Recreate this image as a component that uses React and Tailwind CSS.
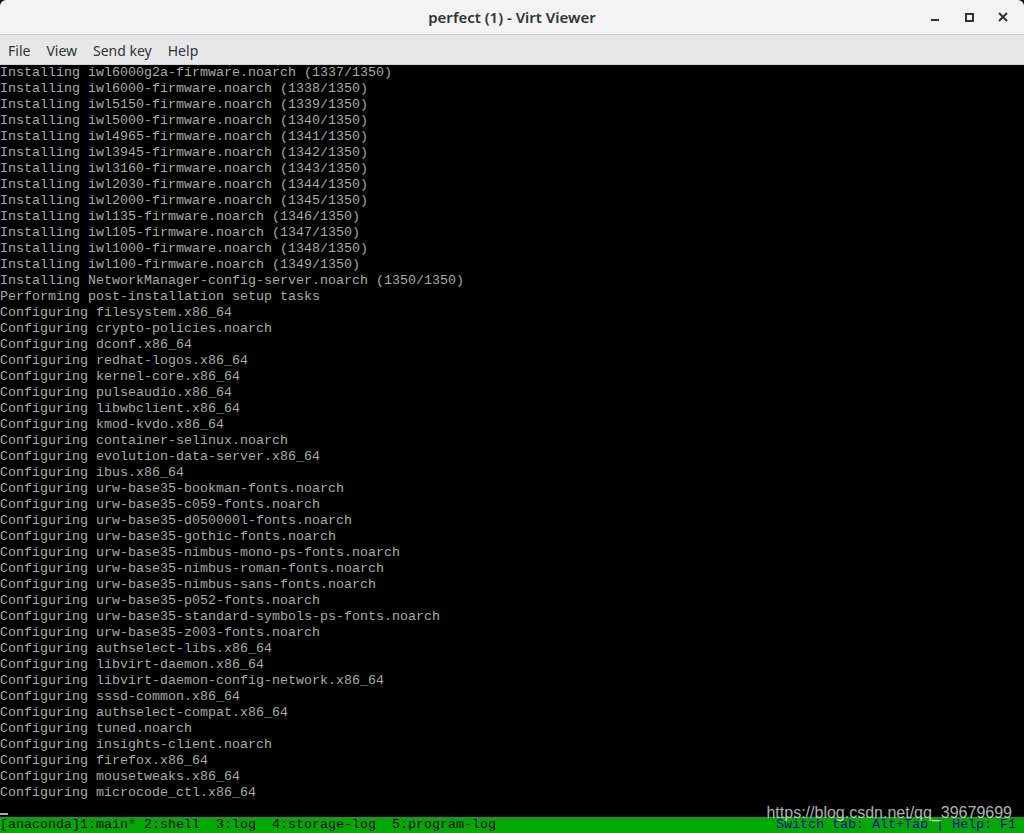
import React from 'react';

const lines = [
  'Installing iwl6000g2a-firmware.noarch (1337/1350)',
  'Installing iwl6000-firmware.noarch (1338/1350)',
  'Installing iwl5150-firmware.noarch (1339/1350)',
  'Installing iwl5000-firmware.noarch (1340/1350)',
  'Installing iwl4965-firmware.noarch (1341/1350)',
  'Installing iwl3945-firmware.noarch (1342/1350)',
  'Installing iwl3160-firmware.noarch (1343/1350)',
  'Installing iwl2030-firmware.noarch (1344/1350)',
  'Installing iwl2000-firmware.noarch (1345/1350)',
  'Installing iwl135-firmware.noarch (1346/1350)',
  'Installing iwl105-firmware.noarch (1347/1350)',
  'Installing iwl1000-firmware.noarch (1348/1350)',
  'Installing iwl100-firmware.noarch (1349/1350)',
  'Installing NetworkManager-config-server.noarch (1350/1350)',
  'Performing post-installation setup tasks',
  'Configuring filesystem.x86_64',
  'Configuring crypto-policies.noarch',
  'Configuring dconf.x86_64',
  'Configuring redhat-logos.x86_64',
  'Configuring kernel-core.x86_64',
  'Configuring pulseaudio.x86_64',
  'Configuring libwbclient.x86_64',
  'Configuring kmod-kvdo.x86_64',
  'Configuring container-selinux.noarch',
  'Configuring evolution-data-server.x86_64',
  'Configuring ibus.x86_64',
  'Configuring urw-base35-bookman-fonts.noarch',
  'Configuring urw-base35-c059-fonts.noarch',
  'Configuring urw-base35-d050000l-fonts.noarch',
  'Configuring urw-base35-gothic-fonts.noarch',
  'Configuring urw-base35-nimbus-mono-ps-fonts.noarch',
  'Configuring urw-base35-nimbus-roman-fonts.noarch',
  'Configuring urw-base35-nimbus-sans-fonts.noarch',
  'Configuring urw-base35-p052-fonts.noarch',
  'Configuring urw-base35-standard-symbols-ps-fonts.noarch',
  'Configuring urw-base35-z003-fonts.noarch',
  'Configuring authselect-libs.x86_64',
  'Configuring libvirt-daemon.x86_64',
  'Configuring libvirt-daemon-config-network.x86_64',
  'Configuring sssd-common.x86_64',
  'Configuring authselect-compat.x86_64',
  'Configuring tuned.noarch',
  'Configuring insights-client.noarch',
  'Configuring firefox.x86_64',
  'Configuring mousetweaks.x86_64',
  'Configuring microcode_ctl.x86_64',
];

const mono = "font-['Liberation_Mono',monospace] text-[13.333px] leading-[16px] whitespace-pre";

const App = () => {
  return (
    <div className="w-[1024px] h-[833px] flex flex-col bg-black overflow-hidden font-['Noto_Sans',sans-serif]">
      {/* title bar */}
      <div className="h-[35px] shrink-0 relative flex items-center justify-center bg-[#f3f3f3] border-b border-[#c8c8c8] rounded-t-[6px]">
        <span className="text-[15px] font-semibold text-[#2e3436]">perfect (1) - Virt Viewer</span>
        <div className="absolute right-0 top-0 h-full flex items-center">
          <div className="w-[34px] flex justify-center">
            <div className="w-[8px] h-[2px] bg-[#2e3436] mt-[6px]" />
          </div>
          <div className="w-[34px] flex justify-center">
            <div className="w-[9px] h-[9px] border-2 border-[#2e3436]" />
          </div>
          <div className="w-[34px] flex justify-center mr-[4px]">
            <svg width="10" height="10" viewBox="0 0 10 10">
              <path d="M1 1L9 9M9 1L1 9" stroke="#2e3436" strokeWidth="2" />
            </svg>
          </div>
        </div>
      </div>

      {/* menu bar */}
      <div className="h-[30px] shrink-0 flex items-center gap-[16px] px-[8px] pt-[1px] bg-[#e8e8e8] border-b border-[#d3d3d3] text-[14px] text-[#2e3436]">
        <span>File</span>
        <span>View</span>
        <span>Send key</span>
        <span>Help</span>
      </div>

      {/* console */}
      <div className="relative flex-1 flex flex-col bg-black">
        <div className={`${mono} text-[#aaaaaa]`}>
          {lines.map((l, i) => (
            <div key={i} className="h-[16px]">{l}</div>
          ))}
          <div className="h-[16px] relative">
            <div className="absolute left-0 bottom-[2px] w-[8px] h-[2px] bg-[#aaaaaa]" />
          </div>
        </div>
        <div className={`${mono} h-[16px] flex justify-between bg-[#00aa00] text-black`}>
          <span>[anaconda]1:main* 2:shell  3:log  4:storage-log  5:program-log</span>
          <span className="text-[#0000aa] pr-[8px]">Switch tab: Alt+Tab | Help: F1</span>
        </div>
        <div className="absolute right-[12px] bottom-[10px] text-[16px] leading-[20px] text-white/70 font-['Liberation_Sans',sans-serif]">
          https://blog.csdn.net/qq_39679699
        </div>
      </div>
    </div>
  );
};

export default App;
